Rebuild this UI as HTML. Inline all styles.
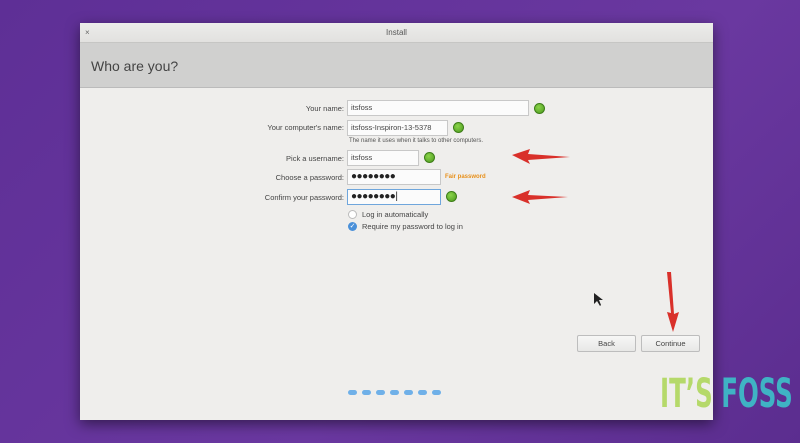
<!DOCTYPE html>
<html><head><style>
*{margin:0;padding:0;box-sizing:border-box}
body{width:800px;height:443px;overflow:hidden;background:linear-gradient(135deg,#5e2f96,#6a38a0 60%,#5b2d8f);font-family:"Liberation Sans","DejaVu Sans",sans-serif;position:relative}
.win{position:absolute;left:80px;top:23px;width:633px;height:397px;background:#efeeec;box-shadow:0 4px 14px rgba(0,0,0,.5);border-radius:3px 3px 0 0}
.tb{height:20px;background:linear-gradient(#ececea,#e2e1df);border-bottom:1px solid #c6c6c4;font-size:8px;color:#555;text-align:center;line-height:20px;position:relative}
.tb span{position:absolute;left:5px;top:0;color:#666}
.hd{height:45px;background:#d0d0cf;border-bottom:1px solid #bbb;font-size:14px;color:#444;padding-left:11px;line-height:47px}
.a{position:absolute;font-size:7.5px;color:#444}
.lbl{text-align:right;width:200px;left:64px}
.in{position:absolute;left:267px;height:16px;background:#fbfbfb;border:1px solid #c8c8c8;font-size:7.5px;color:#444;padding-left:3px;line-height:14px}
.dot{position:absolute;width:11px;height:11px;border-radius:50%;background:radial-gradient(circle at 40% 35%,#8bd44a,#4c9a1e);border:1px solid #3d7d18}
.pw{font-size:10px;letter-spacing:-0.5px;color:#222}
.btn{position:absolute;top:312px;height:17px;width:59px;border:1px solid #bdbdbd;background:linear-gradient(#f7f7f6,#e8e8e6);font-size:7.5px;color:#444;text-align:center;line-height:15px;border-radius:2px}
.pd{position:absolute;top:367px;width:9px;height:5px;border-radius:3px;background:#6fb0e8}
</style></head><body>
<div class="win">
<div class="tb"><span>×</span>Install</div>
<div class="hd">Who are you?</div>
<div class="a lbl" style="top:81px">Your name:</div>
<div class="in" style="top:77px;width:182px">itsfoss</div>
<div class="dot" style="left:454px;top:80px"></div>
<div class="a lbl" style="top:100px">Your computer's name:</div>
<div class="in" style="top:97px;width:101px">itsfoss-Inspiron-13-5378</div>
<div class="dot" style="left:373px;top:99px"></div>
<div class="a" style="left:269px;top:115px;font-size:6px;color:#555">The name it uses when it talks to other computers.</div>
<div class="a lbl" style="top:131px">Pick a username:</div>
<div class="in" style="top:127px;width:72px">itsfoss</div>
<div class="dot" style="left:344px;top:129px"></div>
<div class="a lbl" style="top:150px">Choose a password:</div>
<div class="in pw" style="top:146px;width:94px">●●●●●●●●</div>
<div class="a" style="left:365px;top:151px;font-size:6px;color:#e8901a;font-weight:bold">Fair password</div>
<div class="a lbl" style="top:170px">Confirm your password:</div>
<div class="in pw" style="top:166px;width:94px;border-color:#6fa6dc">●●●●●●●●|</div>
<div class="dot" style="left:366px;top:168px"></div>
<div class="a" style="left:268px;top:187px;width:9px;height:9px;border-radius:50%;background:#fff;border:1px solid #bbb"></div>
<div class="a" style="left:282px;top:187px">Log in automatically</div>
<div class="a" style="left:268px;top:199px;width:9px;height:9px;border-radius:50%;background:#4a90d9;color:#fff;font-size:7px;line-height:9px;text-align:center">✓</div>
<div class="a" style="left:282px;top:199px">Require my password to log in</div>
<div class="btn" style="left:497px">Back</div>
<div class="btn" style="left:561px">Continue</div>
<div class="pd" style="left:268px"></div><div class="pd" style="left:282px"></div><div class="pd" style="left:296px"></div><div class="pd" style="left:310px"></div><div class="pd" style="left:324px"></div><div class="pd" style="left:338px"></div><div class="pd" style="left:352px"></div>
</div>
<svg style="position:absolute;left:0;top:0" width="800" height="443">
<g fill="#d9302a">
<path d="M512 155 L530 149 L528 154 L570 157 L528 160 L530 164 Z"/>
<path d="M512 197 L530 190 L528 195 L568 197 L528 200 L530 204 Z"/>
<path d="M667 272 L671 272 L674 314 L679 312 L673 332 L667 312 L671 313 Z"/>
</g>
<path d="M594 293 L594 304 L597 301 L600 306 L601 305 L599 300 L603 300 Z" fill="#222"/>
</svg>
<div style="position:absolute;left:660px;top:372px;font-family:'DejaVu Sans Condensed','Liberation Sans Narrow',sans-serif;font-weight:bold;font-size:40px;line-height:44px;transform:scaleX(.68);transform-origin:left;white-space:nowrap"><span style="color:#b5d96a">IT’S</span> <span style="color:#3fb3c4">FOSS</span></div>
</body></html>
